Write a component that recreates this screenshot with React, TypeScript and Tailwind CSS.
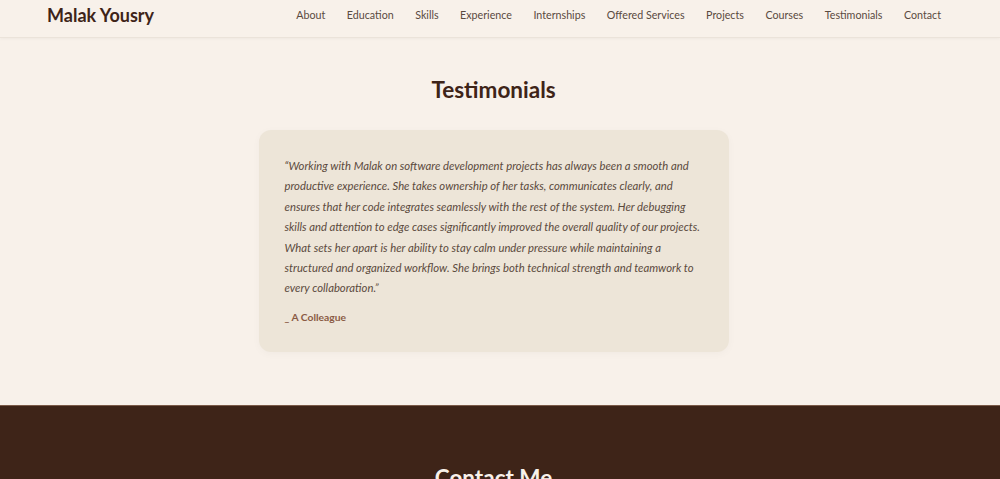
const navLinks = [
  "About",
  "Education",
  "Skills",
  "Experience",
  "Internships",
  "Offered Services",
  "Projects",
  "Courses",
  "Testimonials",
  "Contact",
];

const Header = () => {
  return (
    <header className="flex h-[38px] items-center justify-between border-b border-[#ebe3da] bg-[#f8f1ea] pr-[59px] pb-[6px] pl-[47px] shadow-[0_1px_3px_rgba(0,0,0,0.04)]">
      <h1 className="text-[18px] font-bold text-[#3e2418]">Malak Yousry</h1>
      <nav className="flex items-center gap-[21.5px]">
        {navLinks.map((link) => (
          <a key={link} href="#" className="text-[10.7px] text-[#5a4a3f]">
            {link}
          </a>
        ))}
      </nav>
    </header>
  );
};

const Testimonials = () => {
  return (
    <section className="flex flex-col items-center pt-[37px] pr-[13px] pb-[53px]">
      <h2 className="text-[22.5px] leading-[30px] font-bold text-[#3e2418]">
        Testimonials
      </h2>
      <div className="mt-[25px] w-[470px] rounded-xl bg-[#ede5d8] px-[26px] pt-[26px] pb-[27px] shadow-[0_2px_8px_rgba(0,0,0,0.03)]">
        <p className="text-[11.3px] leading-[20.4px] text-[#5b4a3d] italic">
          “Working with Malak on software development projects has always been a
          smooth and productive experience. She takes ownership of her tasks,
          communicates clearly, and ensures that her code integrates seamlessly
          with the rest of the system. Her debugging skills and attention to edge
          cases significantly improved the overall quality of our projects. What
          sets her apart is her ability to stay calm under pressure while
          maintaining a structured and organized workflow. She brings both
          technical strength and teamwork to every collaboration.”
        </p>
        <p className="mt-[11px] text-[10.3px] font-bold text-[#8a5a44]">
          _ A Colleague
        </p>
      </div>
    </section>
  );
};

const Contact = () => {
  return (
    <section className="flex flex-col items-center border-t border-[#7a5a48] bg-[#3e2418] pt-[55px] pr-[13px] pb-[60px]">
      <h2 className="text-[22.5px] font-bold text-[#f8f1ea]">Contact Me</h2>
    </section>
  );
};

export default function App() {
  return (
    <div className="min-h-screen bg-[#f8f1ea] font-['Lato','Open_Sans',sans-serif]">
      <Header />
      <Testimonials />
      <Contact />
    </div>
  );
}
